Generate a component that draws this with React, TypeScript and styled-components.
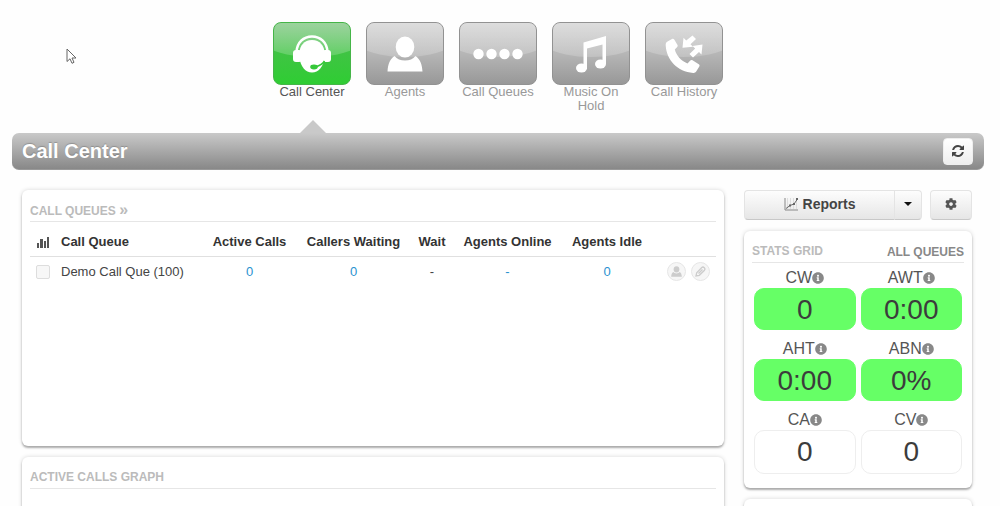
import React from "react";
import styled, { createGlobalStyle, css } from "styled-components";
import { FaCog, FaInfoCircle } from "react-icons/fa";

const GlobalStyle = createGlobalStyle`
  * { box-sizing: border-box; }
  body {
    margin: 0;
    background: #fefefe;
    color: #444;
    font: 13px/16px "Liberation Sans", Arial, sans-serif;
  }
  a { color: #2a92d0; text-decoration: none; }
  button { font-family: inherit; cursor: pointer; }
`;

const Page = styled.div`
  position: relative;
  height: 100vh;
  overflow: hidden;
  padding: 22px 16px 0 12px;
`;

const Pointer = styled.svg`
  position: absolute;
  left: 66px;
  top: 48px;
`;

const Nav = styled.nav`
  display: flex;
  justify-content: center;
  gap: 15px;
  padding: 0 0 20px;
`;

const NavItem = styled.a<{ $active?: boolean }>`
  position: relative;
  width: 78px;
  text-align: center;
  line-height: 14px;
  color: ${(p) => (p.$active ? "#555" : "#999")};
  ${(p) =>
    p.$active &&
    css`
      &::after {
        content: "";
        position: absolute;
        left: 27px;
        bottom: -20px;
        border: 13px solid transparent;
        border-top: 0;
        border-bottom-color: #c9c9c9;
      }
    `}
`;

const Tile = styled.span<{ $active?: boolean }>`
  position: relative;
  display: flex;
  align-items: center;
  justify-content: center;
  height: 63px;
  overflow: hidden;
  border: 1px solid ${(p) => (p.$active ? "#45b548" : "#929292")};
  border-radius: 8px;
  background: ${(p) =>
    p.$active
      ? "linear-gradient(#5fb862, #3fc443 50%, #2fcd33)"
      : "linear-gradient(#c8c8c8, #b6b6b6 50%, #989898)"};
  &::before {
    content: "";
    position: absolute;
    left: -28px;
    right: -28px;
    top: -34px;
    height: 68px;
    border-radius: 50%;
    background: linear-gradient(rgba(255, 255, 255, 0.4) 45%, rgba(255, 255, 255, 0.18));
  }
  svg { position: relative; }
`;

const TitleBar = styled.header`
  display: flex;
  align-items: center;
  justify-content: space-between;
  height: 37px;
  padding: 0 11px 0 10px;
  border-radius: 7px;
  background: linear-gradient(#c9c9c9, #888);
  border-bottom: 1px solid #999;
`;

const Title = styled.h1`
  margin: 0;
  font-size: 20px;
  line-height: 24px;
  color: #fff;
  text-shadow: 0 -1px 1px rgba(0, 0, 0, 0.2);
`;

const Button = styled.button`
  display: flex;
  align-items: center;
  justify-content: center;
  gap: 4px;
  height: 30px;
  padding: 0 0 2px;
  border: 1px solid #e4e4e4;
  border-bottom-color: #c8c8c8;
  border-radius: 4px;
  background: linear-gradient(#fdfdfd, #e6e6e6);
  color: #444;
  font-size: 14px;
  font-weight: bold;
`;

const RefreshButton = styled(Button)`
  width: 30px;
  height: 27px;
  padding: 0;
  border-color: #eee;
  background: linear-gradient(#fff, #eee);
`;

const Content = styled.main`
  display: grid;
  grid-template-columns: minmax(0, 1fr) 228px;
  gap: 20px;
  padding: 20px 12px 0 10px;
`;

const Column = styled.div`
  display: flex;
  flex-direction: column;
  gap: 11px;
`;

const Panel = styled.section<{ $min: number }>`
  flex: none;
  min-height: ${(p) => p.$min}px;
  padding: 12px 8px;
  border-radius: 6px;
  background: #fff;
  box-shadow: 0 2px 2px rgba(0, 0, 0, 0.28), 0 0 4px rgba(0, 0, 0, 0.16);
`;

const PanelHead = styled.div`
  display: flex;
  justify-content: space-between;
  height: 20px;
  border-bottom: 1px solid #e6e6e6;
`;

const PanelTitle = styled.h2`
  margin: 0;
  font-size: 12px;
  line-height: 17px;
  color: #bbb;
`;

const Chevrons = styled.span`
  font-size: 16px;
  line-height: 16px;
`;

const QueueFilter = styled.a`
  font-size: 12px;
  font-weight: bold;
  line-height: 18px;
  color: #888;
`;

const Table = styled.table`
  width: 100%;
  table-layout: fixed;
  border-collapse: collapse;
  th, td { padding: 0; text-align: center; }
  th { height: 34px; padding-top: 6px; color: #333; border-bottom: 1px solid #e0e0e0; }
  td { height: 31px; }
  th:nth-child(2), td:nth-child(2) { text-align: left; }
  th:first-child, td:first-child { text-align: left; padding-left: 6px; }
  svg { vertical-align: middle; }
`;

const Check = styled.input`
  appearance: none;
  display: block;
  width: 14px;
  height: 14px;
  margin: 0;
  border: 1px solid #ddd;
  border-radius: 2px;
  background: #f7f7f7;
`;

const Actions = styled.div`
  display: flex;
  justify-content: flex-end;
  gap: 5px;
  padding-right: 6px;
`;

const RoundButton = styled.button`
  display: flex;
  align-items: center;
  justify-content: center;
  width: 19px;
  height: 19px;
  padding: 0;
  border: 1px solid #e6e6e6;
  border-radius: 50%;
  background: #f6f6f6;
`;

const Toolbar = styled.div`
  display: flex;
  button:nth-child(1) { flex: 1; border-radius: 4px 0 0 4px; }
  button:nth-child(2) { width: 28px; margin-left: -1px; border-radius: 0 4px 4px 0; }
  button:nth-child(3) { width: 42px; margin-left: 8px; }
`;

const Caret = styled.span`
  border: 4px solid transparent;
  border-top-color: #111;
  border-bottom: 0;
`;

const Stats = styled.div`
  display: grid;
  grid-template-columns: 1fr 1fr;
  gap: 9px 5px;
  padding: 5px 2px 0;
`;

const StatLabel = styled.div`
  display: flex;
  align-items: center;
  justify-content: center;
  font-size: 16px;
  line-height: 20px;
  color: #555;
  svg { color: #888; }
`;

const StatValue = styled.div<{ $good?: boolean }>`
  height: ${(p) => (p.$good ? 42 : 44)}px;
  border: 1px solid ${(p) => (p.$good ? "#66ff66" : "#eee")};
  border-radius: 10px;
  background: ${(p) => (p.$good ? "#66ff66" : "#fff")};
  color: #3c3c3c;
  font-size: 28px;
  line-height: 42px;
  text-align: center;
`;

const HeadsetIcon = () => (
  <svg width="38" height="38" viewBox="0 0 38 38" fill="none">
    <path d="M3.500 17C4 7.500 10.500 1.500 19 1.500S34 7.500 34.500 17" stroke="#fff" strokeWidth="2.600" />
    <path d="M19 5C11 5 6.500 11 6.500 18v5c1 8.500 6 14.500 12.500 14.500S30.500 31.500 31.500 23v-5C31.500 11 27 5 19 5Z" fill="#fff" />
    <rect x="0" y="15" width="9" height="12" rx="3" fill="#fff" />
    <rect x="29" y="15" width="9" height="12" rx="3" fill="#fff" />
    <path d="M31.500 26c-2 3.500-4.500 4.500-9 6" stroke="#36c83a" strokeWidth="1.600" />
    <ellipse cx="21" cy="32" rx="3.800" ry="2.400" fill="#36c83a" />
  </svg>
);

const AgentIcon = ({ width = 36, height = 36, fill = "#fff" }) => (
  <svg width={width} height={height} viewBox="0 0 36 36" fill={fill}>
    <ellipse cx="18" cy="11" rx="9.300" ry="10.500" />
    <path d="M7.500 20C10 23 13.500 24.500 18 24.500S26 23 28.500 20C33 23 35 28 35.500 35.500H.5C1 28 3 23 7.500 20Z" />
  </svg>
);

const DotsIcon = () => (
  <svg width="52" height="12" viewBox="0 0 52 12" fill="#fff">
    {[6, 19, 32, 45].map((x) => (
      <circle key={x} cx={x + 0.5} cy="6" r="5.200" />
    ))}
  </svg>
);

const MusicIcon = () => (
  <svg width="32" height="38" viewBox="0 0 32 38" fill="#fff">
    <path d="M8.500 7.500 31 1v28h-3.500V9.500L12 13.500V34H8.500Z" />
    <ellipse cx="6.500" cy="33" rx="5.500" ry="4.500" />
    <ellipse cx="25.500" cy="29" rx="5.500" ry="4.500" />
  </svg>
);

const HistoryIcon = () => (
  <svg width="38" height="40" viewBox="0 0 38 40" fill="#fff">
    <path d="M2.500 7.500 7 5c1-.5 1.800-.2 2.400.7l3.100 5.300c.4.800.3 1.500-.3 2.100L9.800 15.500c1.500 6 6.200 11.300 12.700 14l2.800-2.900c.6-.7 1.400-.8 2.200-.3l6.300 3.900c.8.500 1 1.300.5 2.200L31.200 37.500c-.6 1-1.600 1.500-3 1.400C12.500 37.800 1.500 26 .7 11.500.6 9.700 1 8.300 2.500 7.500Z" />
    <path d="M27.500 1.500 31 5l-5.500 5.200 2.500 2.600-10.500 1 1-10 2.700 2.700Z" />
    <path d="M37.500 10.500 36.500 20.500 34 18l-6 5.500-3.500-3.500 5.700-5.500L27.500 12Z" />
  </svg>
);

const RefreshIcon = () => (
  <svg width="12" height="12" viewBox="0 128 1536 1536" fill="#444">
    <path d="M1511 1056q0 5-1 7-64 268-268 434.500t-478 166.500q-146 0-282.500-55t-243.500-157l-129 129q-19 19-45 19t-45-19-19-45v-448q0-26 19-45t45-19h448q26 0 45 19t19 45-19 45l-137 137q71 66 161 102t187 36q134 0 250-65t186-179q11-17 53-117 8-23 30-23h192q13 0 22.500 9.500t9.500 22.500zm25-800v448q0 26-19 45t-45 19h-448q-26 0-45-19t-19-45 19-45l138-138q-148-137-349-137-134 0-250 65t-186 179q-11 17-53 117-8 23-30 23h-199q-13 0-22.500-9.500t-9.500-22.500v-7q65-268 270-434.500t480-166.500q146 0 284 55.500t245 156.500l130-129q19-19 45-19t45 19 19 45z" />
  </svg>
);

const BarsIcon = () => (
  <svg width="14" height="13" viewBox="0 0 14 13" fill="#555">
    <path d="M1 7h2v5H1zM4 3h3v9H4zM8 5h2v7H8zM11 1h2v11h-2z" />
  </svg>
);

const ChartIcon = () => (
  <svg width="15" height="14" viewBox="0 0 15 14" fill="none">
    <path d="M3.500 1v11M6.500 1v11M9.500 1v11M12.500 1v11" stroke="#ddd" />
    <path d="M1 1v12h13" stroke="#888" />
    <path d="M2 11.500l4-3 4-1.500 3.500-5" stroke="#666" />
    <path d="M5 7.500h2v2H5zM9 6h2v2H9zM12 1h2v2h-2z" fill="#666" />
  </svg>
);

const PencilIcon = () => (
  <svg width="11" height="11" viewBox="0 0 11 11" fill="none" stroke="#ccc" strokeWidth="1.300">
    <path d="M1 10 1.700 6.700 6.800 1.500Q8 .5 9.300 1.700 10.500 3 9.500 4.200L4.300 9.300ZM3.500 7.500 7.500 3.500" />
  </svg>
);

const navItems = [
  { label: "Call Center", icon: <HeadsetIcon />, active: true },
  { label: "Agents", icon: <AgentIcon /> },
  { label: "Call Queues", icon: <DotsIcon /> },
  { label: "Music On Hold", icon: <MusicIcon /> },
  { label: "Call History", icon: <HistoryIcon /> },
];

const stats = [
  { label: "CW", value: "0", good: true },
  { label: "AWT", value: "0:00", good: true },
  { label: "AHT", value: "0:00", good: true },
  { label: "ABN", value: "0%", good: true },
  { label: "CA", value: "0" },
  { label: "CV", value: "0" },
];

const columnWidths = [31, undefined, 101, 107, 50, 101, 98, 60];

export default function App() {
  return (
    <Page>
      <GlobalStyle />
      <Nav>
        {navItems.map((item) => (
          <NavItem key={item.label} href="#" $active={item.active}>
            <Tile $active={item.active}>{item.icon}</Tile>
            {item.label}
          </NavItem>
        ))}
      </Nav>
      <TitleBar>
        <Title>Call Center</Title>
        <RefreshButton aria-label="Refresh">
          <RefreshIcon />
        </RefreshButton>
      </TitleBar>
      <Content>
        <Column>
          <Panel $min={256}>
            <PanelHead>
              <PanelTitle>CALL QUEUES <Chevrons>»</Chevrons></PanelTitle>
            </PanelHead>
            <Table>
              <colgroup>
                {columnWidths.map((width, i) => (
                  <col key={i} width={width} />
                ))}
              </colgroup>
              <thead>
                <tr>
                  <th><BarsIcon /></th>
                  <th>Call Queue</th>
                  <th>Active Calls</th>
                  <th>Callers Waiting</th>
                  <th>Wait</th>
                  <th>Agents Online</th>
                  <th>Agents Idle</th>
                  <th />
                </tr>
              </thead>
              <tbody>
                <tr>
                  <td><Check type="checkbox" id="queue-100" /></td>
                  <td><label htmlFor="queue-100">Demo Call Que (100)</label></td>
                  <td><a href="#">0</a></td>
                  <td><a href="#">0</a></td>
                  <td>-</td>
                  <td><a href="#">-</a></td>
                  <td><a href="#">0</a></td>
                  <td>
                    <Actions>
                      <RoundButton aria-label="Agents">
                        <AgentIcon width={11} height={11} fill="#ccc" />
                      </RoundButton>
                      <RoundButton aria-label="Edit">
                        <PencilIcon />
                      </RoundButton>
                    </Actions>
                  </td>
                </tr>
              </tbody>
            </Table>
          </Panel>
          <Panel $min={256}>
            <PanelHead>
              <PanelTitle>ACTIVE CALLS GRAPH</PanelTitle>
            </PanelHead>
          </Panel>
        </Column>
        <Column>
          <Toolbar>
            <Button><ChartIcon />Reports</Button>
            <Button aria-label="More reports"><Caret /></Button>
            <Button aria-label="Settings"><FaCog size={12} color="#555" /></Button>
          </Toolbar>
          <Panel $min={257}>
            <PanelHead>
              <PanelTitle>STATS GRID</PanelTitle>
              <QueueFilter href="#">ALL QUEUES</QueueFilter>
            </PanelHead>
            <Stats>
              {stats.map((stat) => (
                <div key={stat.label}>
                  <StatLabel>{stat.label}<FaInfoCircle size={12} /></StatLabel>
                  <StatValue $good={stat.good}>{stat.value}</StatValue>
                </div>
              ))}
            </Stats>
          </Panel>
          <Panel $min={256} />
        </Column>
      </Content>
      <Pointer width="11" height="17" viewBox="0 0 11 17" fill="#fff" stroke="#666">
        <path d="M1 1v12.500l3-2.700 2 4.500 2-1-2-4.300h4Z" />
      </Pointer>
    </Page>
  );
}
